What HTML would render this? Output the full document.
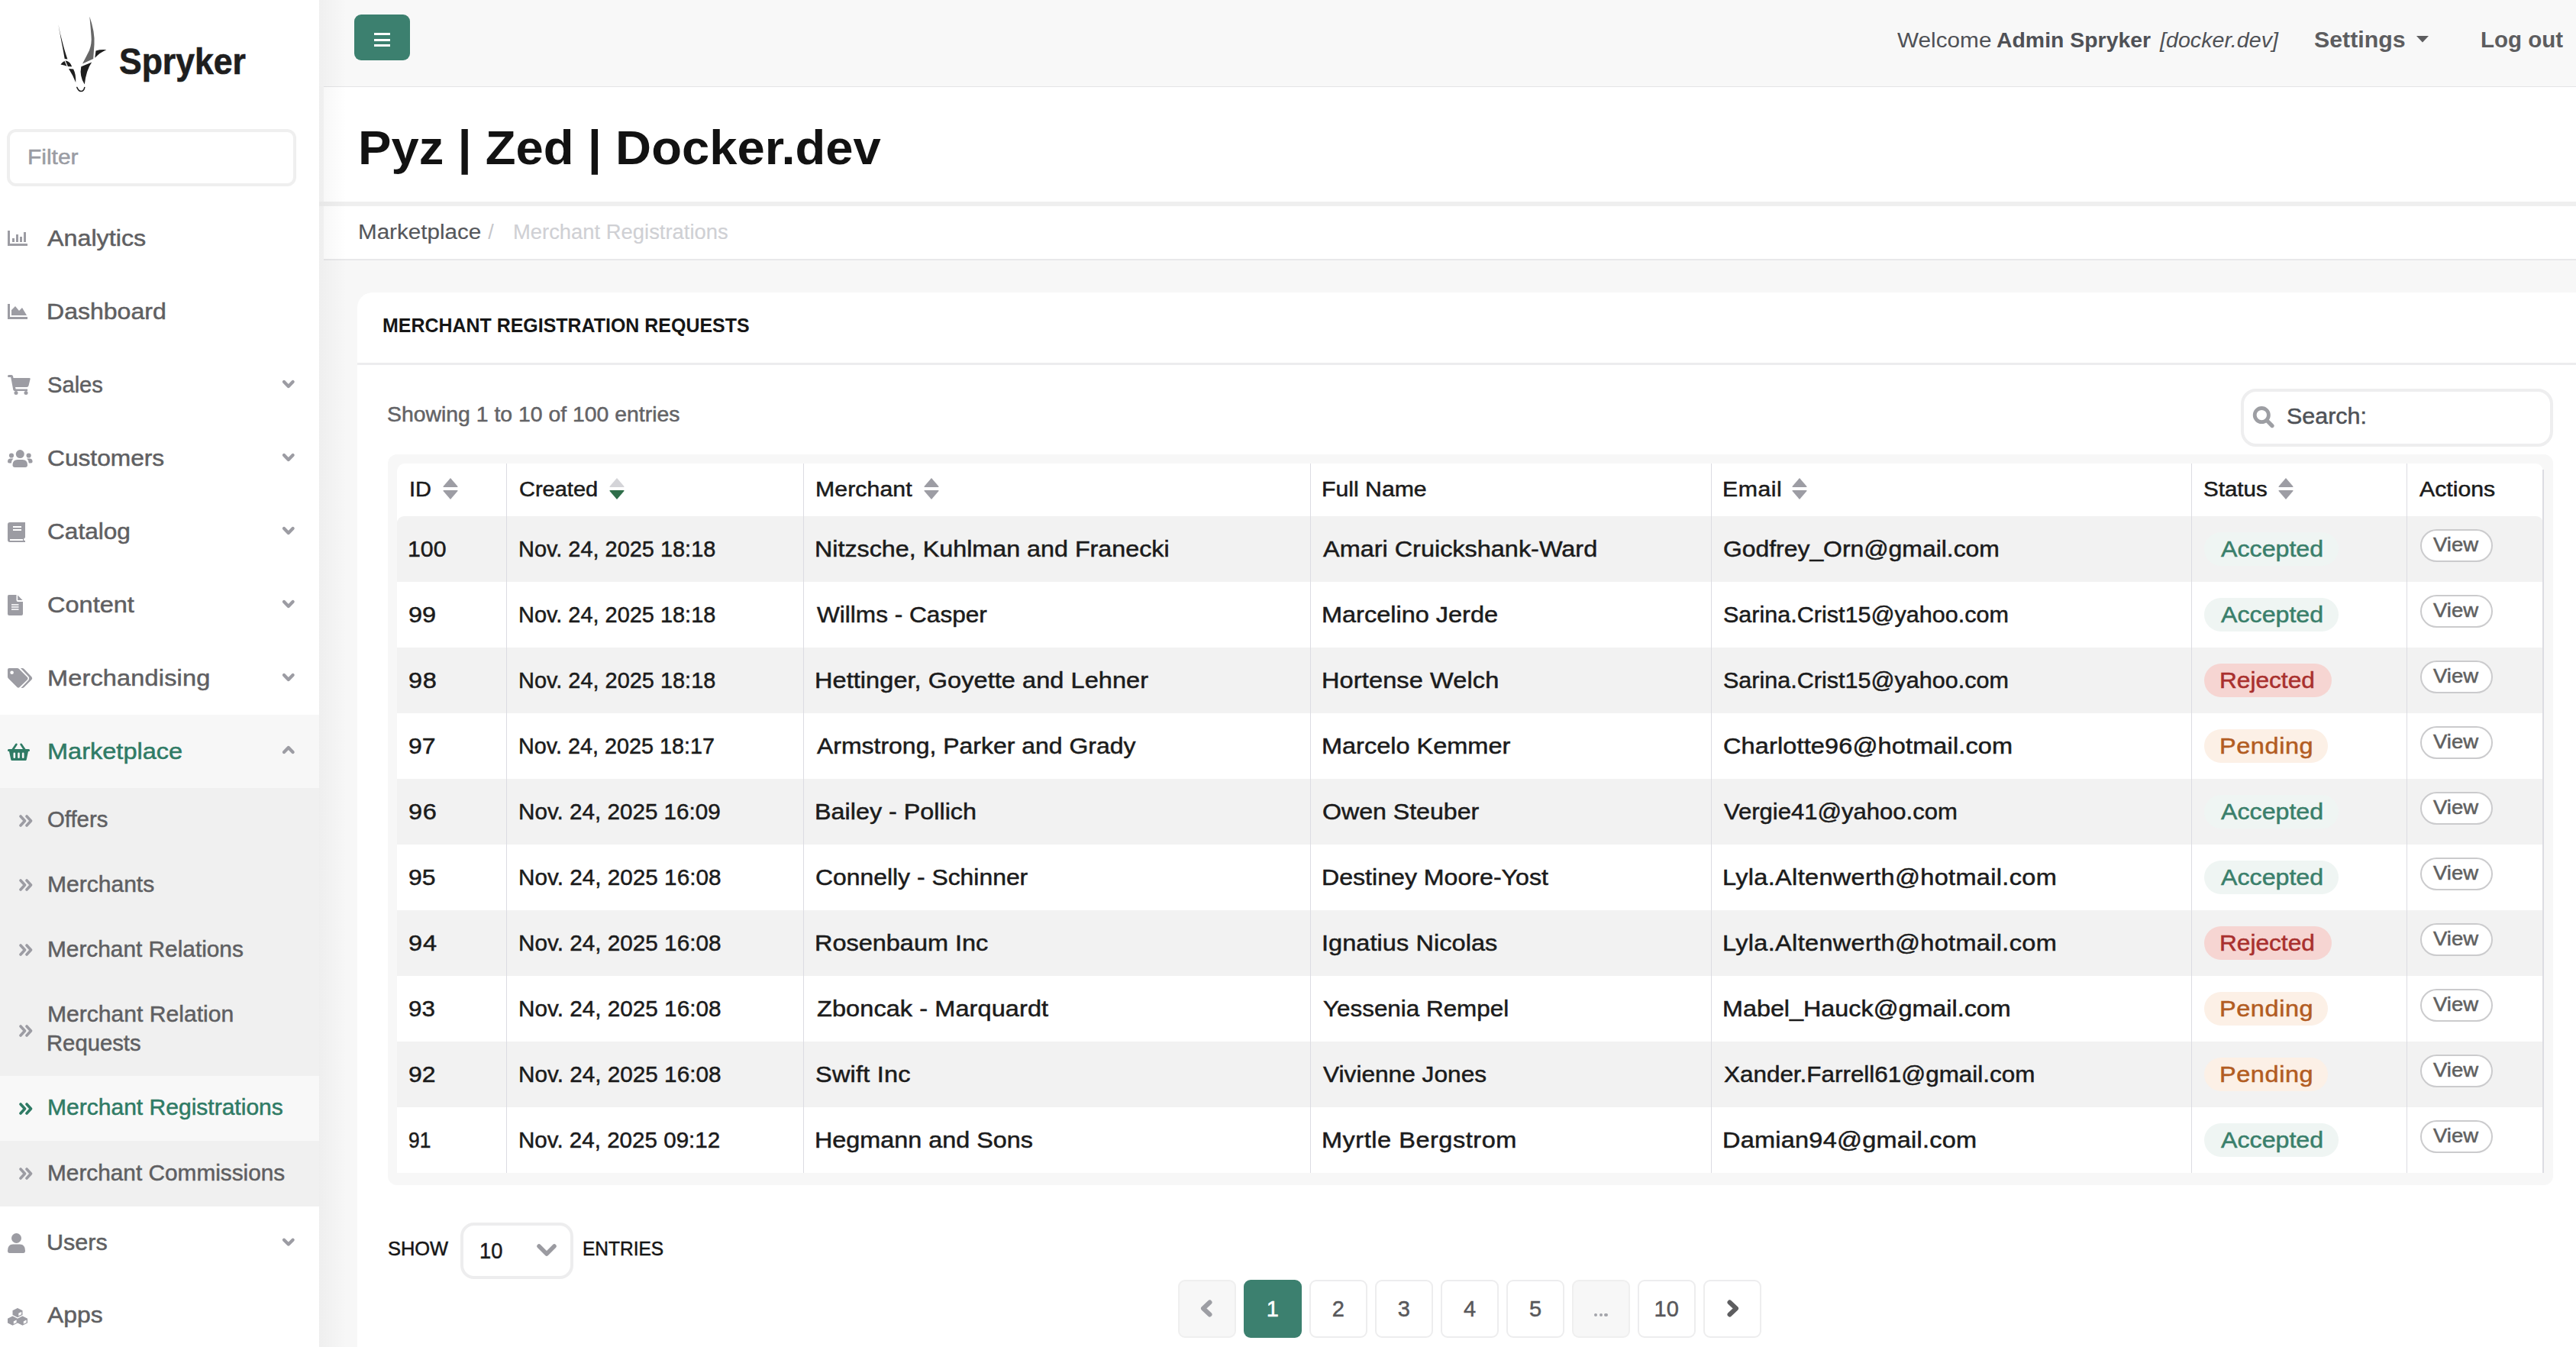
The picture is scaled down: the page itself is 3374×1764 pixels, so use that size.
<!DOCTYPE html><html><head><meta charset="utf-8"><title>Spryker</title><style>
html,body{margin:0;padding:0;width:3374px;height:1764px;overflow:hidden;background:#f5f5f5;font-family:"Liberation Sans", sans-serif;}
.t{position:absolute;white-space:pre;}
</style></head><body>
<div style="position:absolute;left:0px;top:0px;width:418px;height:1764px;background:#ffffff;"></div>
<div style="position:absolute;left:418px;top:0px;width:2956px;height:113px;background:#f8f8f8;"></div>
<div style="position:absolute;left:418px;top:113px;width:2956px;height:1651px;background:#f7f7f7;"></div>
<div style="position:absolute;left:418px;top:264px;width:2956px;height:6px;background:#efefef;"></div>
<div style="position:absolute;left:424px;top:113px;width:2950px;height:1px;background:#e4e4e6;"></div>
<div style="position:absolute;left:424px;top:114px;width:2950px;height:150px;background:#ffffff;"></div>
<div style="position:absolute;left:424px;top:270px;width:2950px;height:69px;background:#ffffff;"></div>
<div style="position:absolute;left:424px;top:339px;width:2950px;height:2px;background:#e8e8ea;"></div>
<div style="position:absolute;left:418px;top:0px;width:36px;height:1764px;background:linear-gradient(to right, rgba(0,0,0,0.035), rgba(0,0,0,0));"></div>
<svg style="position:absolute;left:0;top:0" width="160" height="130" viewBox="0 0 160 130">
<path d="M76.4 32.1 Q79.5 50 82 62 Q83.5 70 84.7 77 L88.4 77.4 Q84.5 66 82.5 58 Q78.5 44 76.4 32.1 Z" fill="#1e1e1e"/>
<path d="M117.3 21.5 Q124.5 42 123.5 58 L122.2 77 L108 83.6 Q113 74 117 66 Q120.5 57 119.5 47 Q118.5 33 117.3 21.5 Z" fill="#676767"/>
<path d="M125.5 66.4 Q132 64.5 139.4 65.2 Q131 68.5 124.3 75.8 Z" fill="#1e1e1e"/>
<path d="M79.4 84.4 Q82.5 80.3 86.5 79.6 Q92 81 94.2 87.2 L88.8 87 Q84 85.3 79.4 84.4 Z" fill="#1e1e1e"/>
<path d="M85 79.5 L88.5 87.5" stroke="#fff" stroke-width="1.2"/>
<path d="M90 90.1 L96.1 90.5 Q99.7 97 99.2 108.1 Q96 99.5 90 90.1 Z" fill="#1e1e1e"/>
<path d="M106.3 87.2 L120.2 81.5 Q112.8 92 110.8 110.5 Q103.8 100 106.3 87.2 Z" fill="#1e1e1e"/>
<path d="M100.8 114.4 Q103 119.5 106 119.5 Q110 119.5 110.8 114.4" fill="none" stroke="#1e1e1e" stroke-width="1.5" stroke-linecap="round"/>
</svg>
<div style="position:absolute;left:8.5px;top:168.5px;width:379px;height:75px;background:#ffffff;border:4px solid #efefef;border-radius:12px;box-sizing:border-box"></div>
<div style="position:absolute;left:0px;top:936px;width:418px;height:96px;background:#f7f7f7;"></div>
<div style="position:absolute;left:0px;top:1032px;width:418px;height:377px;background:#f0f0f0;"></div>
<div style="position:absolute;left:0px;top:1409px;width:418px;height:85px;background:#f8f8f8;"></div>
<div style="position:absolute;left:0px;top:1494px;width:418px;height:86px;background:#f0f0f0;"></div>
<svg style="position:absolute;left:0;top:0;overflow:visible" width="1" height="1"><path d="M372.0 500.1 L377.8 505.9 L383.6 500.1" fill="none" stroke="#9c9ca3" stroke-width="4.3" stroke-linecap="round" stroke-linejoin="round"/></svg>
<svg style="position:absolute;left:0;top:0;overflow:visible" width="1" height="1"><path d="M372.0 596.1 L377.8 601.9 L383.6 596.1" fill="none" stroke="#9c9ca3" stroke-width="4.3" stroke-linecap="round" stroke-linejoin="round"/></svg>
<svg style="position:absolute;left:0;top:0;overflow:visible" width="1" height="1"><path d="M372.0 692.1 L377.8 697.9 L383.6 692.1" fill="none" stroke="#9c9ca3" stroke-width="4.3" stroke-linecap="round" stroke-linejoin="round"/></svg>
<svg style="position:absolute;left:0;top:0;overflow:visible" width="1" height="1"><path d="M372.0 788.1 L377.8 793.9 L383.6 788.1" fill="none" stroke="#9c9ca3" stroke-width="4.3" stroke-linecap="round" stroke-linejoin="round"/></svg>
<svg style="position:absolute;left:0;top:0;overflow:visible" width="1" height="1"><path d="M372.0 884.1 L377.8 889.9 L383.6 884.1" fill="none" stroke="#9c9ca3" stroke-width="4.3" stroke-linecap="round" stroke-linejoin="round"/></svg>
<svg style="position:absolute;left:0;top:0;overflow:visible" width="1" height="1"><path d="M372.0 1623.6999999999998 L377.8 1629.5 L383.6 1623.6999999999998" fill="none" stroke="#9c9ca3" stroke-width="4.3" stroke-linecap="round" stroke-linejoin="round"/></svg>
<svg style="position:absolute;left:0;top:0;overflow:visible" width="1" height="1"><path d="M372.0 984.9 L377.8 979.1 L383.6 984.9" fill="none" stroke="#9c9ca3" stroke-width="4.3" stroke-linecap="round" stroke-linejoin="round"/></svg>
<svg style="position:absolute;left:24.5px;top:1066.5px" width="20" height="16" viewBox="0 0 20 16"><path d="M2 2 L7.5 8 L2 14 M10 2 L15.5 8 L10 14" fill="none" stroke="#9c9ca3" stroke-width="3.6" stroke-linecap="round" stroke-linejoin="round"/></svg>
<svg style="position:absolute;left:24.5px;top:1151px" width="20" height="16" viewBox="0 0 20 16"><path d="M2 2 L7.5 8 L2 14 M10 2 L15.5 8 L10 14" fill="none" stroke="#9c9ca3" stroke-width="3.6" stroke-linecap="round" stroke-linejoin="round"/></svg>
<svg style="position:absolute;left:24.5px;top:1236.2px" width="20" height="16" viewBox="0 0 20 16"><path d="M2 2 L7.5 8 L2 14 M10 2 L15.5 8 L10 14" fill="none" stroke="#9c9ca3" stroke-width="3.6" stroke-linecap="round" stroke-linejoin="round"/></svg>
<svg style="position:absolute;left:24.5px;top:1529.3px" width="20" height="16" viewBox="0 0 20 16"><path d="M2 2 L7.5 8 L2 14 M10 2 L15.5 8 L10 14" fill="none" stroke="#9c9ca3" stroke-width="3.6" stroke-linecap="round" stroke-linejoin="round"/></svg>
<svg style="position:absolute;left:24.5px;top:1342px" width="20" height="16" viewBox="0 0 20 16"><path d="M2 2 L7.5 8 L2 14 M10 2 L15.5 8 L10 14" fill="none" stroke="#9c9ca3" stroke-width="3.6" stroke-linecap="round" stroke-linejoin="round"/></svg>
<svg style="position:absolute;left:24.5px;top:1443.5px" width="20" height="16" viewBox="0 0 20 16"><path d="M2 2 L7.5 8 L2 14 M10 2 L15.5 8 L10 14" fill="none" stroke="#2f7b65" stroke-width="3.6" stroke-linecap="round" stroke-linejoin="round"/></svg>
<svg style="position:absolute;left:10px;top:302px" width="26" height="20" viewBox="0 0 26 20" fill="#9c9ca3"><rect x="0" y="0" width="3" height="20"/><rect x="0" y="17" width="26" height="3"/><rect x="6" y="10" width="3" height="5"/><rect x="11" y="5" width="3" height="10"/><rect x="16" y="8" width="3" height="7"/><rect x="21" y="2" width="3" height="13"/></svg>
<svg style="position:absolute;left:10px;top:398px" width="26" height="20" viewBox="0 0 26 20" fill="#9c9ca3"><rect x="0" y="0" width="3" height="20"/><rect x="0" y="17" width="26" height="3"/><path d="M5 15 L5 8 L10 3 L15 9 L19 5 L25 15 Z"/></svg>
<svg style="position:absolute;left:10px;top:491px" width="30" height="26" viewBox="0 0 30 26" fill="#9c9ca3"><path d="M0 1.5 Q0 0 1.5 0 L5 0 Q6.5 0 7 1.5 L7.5 4 L28.5 4 Q30 4 29.6 5.5 L27.5 14 Q27 16 25 16 L10 16 L10.6 18.5 L26 18.5 L26 21 L9 21 Q7.6 21 7.3 19.6 L4.2 3 L1.5 3 Q0 3 0 1.5Z"/><circle cx="11" cy="23.5" r="2.5"/><circle cx="24" cy="23.5" r="2.5"/></svg>
<svg style="position:absolute;left:10px;top:589px" width="33" height="23" viewBox="0 0 33 23" fill="#9c9ca3"><circle cx="16.3" cy="5.6" r="5.5"/><circle cx="5" cy="7.5" r="3.1"/><circle cx="27.6" cy="7.5" r="3.1"/><path d="M6.5 20 Q6.5 13 13 13 L19.5 13 Q26 13 26 20 Q26 23 23 23 L9.5 23 Q6.5 23 6.5 20 Z"/><path d="M0 15.5 Q0 11.5 4 11.5 L7.5 11.5 Q5 13.5 4.8 17.5 L2 17.5 Q0 17.5 0 15.5 Z"/><path d="M32.6 15.5 Q32.6 11.5 28.6 11.5 L25.1 11.5 Q27.6 13.5 27.8 17.5 L30.6 17.5 Q32.6 17.5 32.6 15.5 Z"/></svg>
<svg style="position:absolute;left:10px;top:684px" width="23" height="26" viewBox="0 0 23 26" fill="#9c9ca3"><path d="M3 0 L23 0 L23 20 Q21 21 21 23 Q21 24 23 24 L23 26 L3 26 Q0 26 0 23 L0 3 Q0 0 3 0 Z"/><rect x="7" y="5" width="11" height="2" fill="#fff"/><rect x="7" y="9" width="11" height="2" fill="#fff"/><rect x="3" y="22" width="17" height="2" fill="#fff"/></svg>
<svg style="position:absolute;left:10px;top:779px" width="20" height="27" viewBox="0 0 20 27" fill="#9c9ca3"><path d="M1.5 0 L11.5 0 L11.5 7 Q11.5 9 13.5 9 L20 9 L20 25 Q20 27 18 27 L2 27 Q0 27 0 25 L0 2 Q0 0 1.5 0 Z"/><path d="M13.2 0.5 L19.5 7 L13.2 7 Z"/><rect x="5" y="12.2" width="9.5" height="1.5" fill="#fff"/><rect x="5" y="15.2" width="9.5" height="1.5" fill="#fff"/><rect x="5" y="18.3" width="9.5" height="1.5" fill="#fff"/></svg>
<svg style="position:absolute;left:10px;top:875px" width="33" height="26" viewBox="0 0 33 26" fill="#9c9ca3"><path d="M0 2 Q0 0 2 0 L12.5 0 Q14 0 15 1 L25.5 11.5 Q27.5 13.5 25.5 15.5 L15.5 25 Q14 26.5 12.5 25 L1 13.5 Q0 12.5 0 11 Z"/><circle cx="5.6" cy="5.7" r="2.3" fill="#fff"/><path d="M17 0 L19 0 Q20.5 0 21.5 1 L31.5 11.5 Q33 13.2 31.5 15 L21.5 25 Q20.5 26 19 26 L17.5 26 L27.5 15.5 Q29.2 13.3 27.5 11.3 Z"/></svg>
<svg style="position:absolute;left:10px;top:972.5px" width="29" height="23.5" viewBox="0 0 29 23.5" fill="#2f7b65"><path d="M1.3 8 L27.7 8 Q29 8 29 9.5 Q29 11 27.7 11 L27 11 L24.8 21.5 Q24.4 23.5 22 23.5 L7 23.5 Q4.6 23.5 4.2 21.5 L2 11 L1.3 11 Q0 11 0 9.5 Q0 8 1.3 8 Z"/><path d="M5.5 8 L10.3 1 Q11 0 12.2 0.7 Q13.2 1.4 12.5 2.5 L9 8 Z"/><path d="M23.5 8 L18.7 1 Q18 0 16.8 0.7 Q15.8 1.4 16.5 2.5 L20 8 Z"/><rect x="7.5" y="12.5" width="2.6" height="7.5" rx="1.3" fill="#f7f7f7"/><rect x="13.2" y="12.5" width="2.6" height="7.5" rx="1.3" fill="#f7f7f7"/><rect x="18.9" y="12.5" width="2.6" height="7.5" rx="1.3" fill="#f7f7f7"/></svg>
<svg style="position:absolute;left:10px;top:1615px" width="23" height="26" viewBox="0 0 23 26" fill="#9c9ca3"><circle cx="11.5" cy="6.5" r="6.5"/><path d="M0 23 Q0 14.5 7 14.5 L16 14.5 Q23 14.5 23 23 Q23 26 20.5 26 L2.5 26 Q0 26 0 23 Z"/></svg>
<svg style="position:absolute;left:10px;top:1712.5px" width="26" height="23" viewBox="0 0 26 23" fill="#9c9ca3"><path d="M13.0 0 L19.5 3.2 L19.5 9 L13.0 12.2 L6.5 9 L6.5 3.2 Z"/><path d="M14.3 6.8 L18.1 4.9 L18.1 8.3 L14.3 10.2 Z" fill="#fff"/><path d="M6.5 10.6 L13 13.8 L13 19.6 L6.5 22.799999999999997 L0 19.6 L0 13.8 Z"/><path d="M7.8 17.4 L11.6 15.5 L11.6 18.9 L7.8 20.799999999999997 Z" fill="#fff"/><path d="M19.5 10.6 L26 13.8 L26 19.6 L19.5 22.799999999999997 L13 19.6 L13 13.8 Z"/><path d="M20.8 17.4 L24.6 15.5 L24.6 18.9 L20.8 20.799999999999997 Z" fill="#fff"/></svg>
<div style="position:absolute;left:464px;top:19px;width:73px;height:60px;background:#3c806f;border-radius:9px"></div>
<div style="position:absolute;left:490px;top:43px;width:21px;height:3px;background:#ffffff;"></div>
<div style="position:absolute;left:490px;top:50.5px;width:21px;height:3px;background:#ffffff;"></div>
<div style="position:absolute;left:490px;top:58px;width:21px;height:3px;background:#ffffff;"></div>
<svg style="position:absolute;left:3165px;top:46.5px" width="16" height="9"><path d="M0 0 L16 0 L8 8.5 Z" fill="#5d5d5f"/></svg>
<div style="position:absolute;left:468px;top:383px;width:2936px;height:1411px;background:#ffffff;border-radius:20px"></div>
<div style="position:absolute;left:468px;top:475px;width:2906px;height:3px;background:#ececee;"></div>
<div style="position:absolute;left:2935px;top:509px;width:409px;height:76px;background:#ffffff;border:4px solid #eeeeef;border-radius:20px;box-sizing:border-box"></div>
<svg style="position:absolute;left:2950px;top:531px" width="30" height="30" viewBox="0 0 30 30"><circle cx="12.3" cy="12.6" r="9.1" fill="none" stroke="#9d9ea3" stroke-width="4.8"/><path d="M19 19.5 L26 26.6" stroke="#9d9ea3" stroke-width="5.2" stroke-linecap="round"/></svg>
<div style="position:absolute;left:508px;top:595px;width:2836px;height:957px;background:#f7f7f7;border-radius:12px"></div>
<div style="position:absolute;left:520px;top:607px;width:2811px;height:929px;background:#ffffff;border-radius:10px 10px 0 0"></div>
<div style="position:absolute;left:520px;top:676px;width:2811px;height:86px;background:#f2f2f2;border-radius:9px 9px 0 0"></div>
<div style="position:absolute;left:520px;top:848px;width:2811px;height:86px;background:#f2f2f2;"></div>
<div style="position:absolute;left:520px;top:1020px;width:2811px;height:86px;background:#f2f2f2;"></div>
<div style="position:absolute;left:520px;top:1192px;width:2811px;height:86px;background:#f2f2f2;"></div>
<div style="position:absolute;left:520px;top:1364px;width:2811px;height:86px;background:#f2f2f2;"></div>
<div style="position:absolute;left:662.5px;top:607px;width:1.5px;height:929px;background:#dcdce2;"></div>
<div style="position:absolute;left:1051.5px;top:607px;width:1.5px;height:929px;background:#dcdce2;"></div>
<div style="position:absolute;left:1715.5px;top:607px;width:1.5px;height:929px;background:#dcdce2;"></div>
<div style="position:absolute;left:2240.5px;top:607px;width:1.5px;height:929px;background:#dcdce2;"></div>
<div style="position:absolute;left:2869.5px;top:607px;width:1.5px;height:929px;background:#dcdce2;"></div>
<div style="position:absolute;left:3151.5px;top:607px;width:1.5px;height:929px;background:#dcdce2;"></div>
<div style="position:absolute;left:3330px;top:615px;width:1.5px;height:921px;background:#dcdce2;"></div>
<svg style="position:absolute;left:579.5px;top:625.5px" width="20" height="29" viewBox="0 0 20 29"><path d="M10 0 L19.5 11 Q20 12 18.5 12 L1.5 12 Q0 12 0.5 11 Z" fill="#9d9da4"/><path d="M10 28 L19.5 17 Q20 16 18.5 16 L1.5 16 Q0 16 0.5 17 Z" fill="#9d9da4"/></svg>
<svg style="position:absolute;left:797.5px;top:625.5px" width="20" height="29" viewBox="0 0 20 29"><path d="M10 0 L19.5 11 Q20 12 18.5 12 L1.5 12 Q0 12 0.5 11 Z" fill="#d4d4d8"/><path d="M10 28 L19.5 17 Q20 16 18.5 16 L1.5 16 Q0 16 0.5 17 Z" fill="#2f6e4a"/></svg>
<svg style="position:absolute;left:1210px;top:625.5px" width="20" height="29" viewBox="0 0 20 29"><path d="M10 0 L19.5 11 Q20 12 18.5 12 L1.5 12 Q0 12 0.5 11 Z" fill="#9d9da4"/><path d="M10 28 L19.5 17 Q20 16 18.5 16 L1.5 16 Q0 16 0.5 17 Z" fill="#9d9da4"/></svg>
<svg style="position:absolute;left:2346.5px;top:625.5px" width="20" height="29" viewBox="0 0 20 29"><path d="M10 0 L19.5 11 Q20 12 18.5 12 L1.5 12 Q0 12 0.5 11 Z" fill="#9d9da4"/><path d="M10 28 L19.5 17 Q20 16 18.5 16 L1.5 16 Q0 16 0.5 17 Z" fill="#9d9da4"/></svg>
<svg style="position:absolute;left:2983.5px;top:625.5px" width="20" height="29" viewBox="0 0 20 29"><path d="M10 0 L19.5 11 Q20 12 18.5 12 L1.5 12 Q0 12 0.5 11 Z" fill="#9d9da4"/><path d="M10 28 L19.5 17 Q20 16 18.5 16 L1.5 16 Q0 16 0.5 17 Z" fill="#9d9da4"/></svg>
<div style="position:absolute;left:2887px;top:697px;width:175.5px;height:44px;background:#eff5f3;border-radius:22px"></div>
<div style="position:absolute;left:3169.5px;top:692.5px;width:95px;height:43.5px;background:#ffffff;border:2px solid #cbcbcd;border-radius:22px;box-sizing:border-box"></div>
<div style="position:absolute;left:2887px;top:783px;width:175.5px;height:44px;background:#eff5f3;border-radius:22px"></div>
<div style="position:absolute;left:3169.5px;top:778.5px;width:95px;height:43.5px;background:#ffffff;border:2px solid #cbcbcd;border-radius:22px;box-sizing:border-box"></div>
<div style="position:absolute;left:2887px;top:869px;width:167px;height:44px;background:#f6d5d2;border-radius:22px"></div>
<div style="position:absolute;left:3169.5px;top:864.5px;width:95px;height:43.5px;background:#ffffff;border:2px solid #cbcbcd;border-radius:22px;box-sizing:border-box"></div>
<div style="position:absolute;left:2887px;top:955px;width:161.6px;height:44px;background:#fcf0e6;border-radius:22px"></div>
<div style="position:absolute;left:3169.5px;top:950.5px;width:95px;height:43.5px;background:#ffffff;border:2px solid #cbcbcd;border-radius:22px;box-sizing:border-box"></div>
<div style="position:absolute;left:2887px;top:1041px;width:175.5px;height:44px;background:#eff5f3;border-radius:22px"></div>
<div style="position:absolute;left:3169.5px;top:1036.5px;width:95px;height:43.5px;background:#ffffff;border:2px solid #cbcbcd;border-radius:22px;box-sizing:border-box"></div>
<div style="position:absolute;left:2887px;top:1127px;width:175.5px;height:44px;background:#eff5f3;border-radius:22px"></div>
<div style="position:absolute;left:3169.5px;top:1122.5px;width:95px;height:43.5px;background:#ffffff;border:2px solid #cbcbcd;border-radius:22px;box-sizing:border-box"></div>
<div style="position:absolute;left:2887px;top:1213px;width:167px;height:44px;background:#f6d5d2;border-radius:22px"></div>
<div style="position:absolute;left:3169.5px;top:1208.5px;width:95px;height:43.5px;background:#ffffff;border:2px solid #cbcbcd;border-radius:22px;box-sizing:border-box"></div>
<div style="position:absolute;left:2887px;top:1299px;width:161.6px;height:44px;background:#fcf0e6;border-radius:22px"></div>
<div style="position:absolute;left:3169.5px;top:1294.5px;width:95px;height:43.5px;background:#ffffff;border:2px solid #cbcbcd;border-radius:22px;box-sizing:border-box"></div>
<div style="position:absolute;left:2887px;top:1385px;width:161.6px;height:44px;background:#fcf0e6;border-radius:22px"></div>
<div style="position:absolute;left:3169.5px;top:1380.5px;width:95px;height:43.5px;background:#ffffff;border:2px solid #cbcbcd;border-radius:22px;box-sizing:border-box"></div>
<div style="position:absolute;left:2887px;top:1471px;width:175.5px;height:44px;background:#eff5f3;border-radius:22px"></div>
<div style="position:absolute;left:3169.5px;top:1466.5px;width:95px;height:43.5px;background:#ffffff;border:2px solid #cbcbcd;border-radius:22px;box-sizing:border-box"></div>
<div style="position:absolute;left:602.5px;top:1601px;width:148.5px;height:74px;background:#ffffff;border:4px solid #ededee;border-radius:18px;box-sizing:border-box"></div>
<svg style="position:absolute;left:703px;top:1629px" width="26" height="18" viewBox="0 0 26 18"><path d="M3 3 L13 13 L23 3" fill="none" stroke="#9b9ba1" stroke-width="5.5" stroke-linecap="round" stroke-linejoin="round"/></svg>
<div style="position:absolute;left:1543.3px;top:1676.4px;width:75.5px;height:75.5px;background:#f7f7f7;border:2px solid #efefef;border-radius:9px;box-sizing:border-box"></div>
<svg style="position:absolute;left:1571.05px;top:1701px" width="20" height="26" viewBox="0 0 20 26"><path d="M13.5 4.5 L5 12.5 L13.5 20.5" fill="none" stroke="#9d9ea4" stroke-width="6" stroke-linecap="round" stroke-linejoin="round"/></svg>
<div style="position:absolute;left:1629px;top:1676.4px;width:76px;height:75.5px;background:#3c806f;border-radius:9px"></div>
<div class="t" style="left:1629px;top:1700.1px;width:75.5px;text-align:center;font-size:29px;line-height:29px;color:#ffffff;-webkit-text-stroke:0.5px #ffffff">1</div>
<div style="position:absolute;left:1715px;top:1676.4px;width:75.5px;height:75.5px;background:#ffffff;border:2px solid #ededee;border-radius:9px;box-sizing:border-box"></div>
<div class="t" style="left:1715px;top:1700.1px;width:75.5px;text-align:center;font-size:29px;line-height:29px;color:#58585b;-webkit-text-stroke:0.5px #58585b">2</div>
<div style="position:absolute;left:1801px;top:1676.4px;width:75.5px;height:75.5px;background:#ffffff;border:2px solid #ededee;border-radius:9px;box-sizing:border-box"></div>
<div class="t" style="left:1801px;top:1700.1px;width:75.5px;text-align:center;font-size:29px;line-height:29px;color:#58585b;-webkit-text-stroke:0.5px #58585b">3</div>
<div style="position:absolute;left:1887.4px;top:1676.4px;width:75.5px;height:75.5px;background:#ffffff;border:2px solid #ededee;border-radius:9px;box-sizing:border-box"></div>
<div class="t" style="left:1887.4px;top:1700.1px;width:75.5px;text-align:center;font-size:29px;line-height:29px;color:#58585b;-webkit-text-stroke:0.5px #58585b">4</div>
<div style="position:absolute;left:1973.4px;top:1676.4px;width:75.5px;height:75.5px;background:#ffffff;border:2px solid #ededee;border-radius:9px;box-sizing:border-box"></div>
<div class="t" style="left:1973.4px;top:1700.1px;width:75.5px;text-align:center;font-size:29px;line-height:29px;color:#58585b;-webkit-text-stroke:0.5px #58585b">5</div>
<div style="position:absolute;left:2059.4px;top:1676.4px;width:75.5px;height:75.5px;background:#f7f7f7;border:2px solid #efefef;border-radius:9px;box-sizing:border-box"></div>
<div style="position:absolute;left:2087.9500000000003px;top:1719.8px;width:4.4px;height:4.4px;border-radius:3px;background:#a3a4aa"></div>
<div style="position:absolute;left:2094.55px;top:1719.8px;width:4.4px;height:4.4px;border-radius:3px;background:#a3a4aa"></div>
<div style="position:absolute;left:2101.15px;top:1719.8px;width:4.4px;height:4.4px;border-radius:3px;background:#a3a4aa"></div>
<div style="position:absolute;left:2145px;top:1676.4px;width:75.5px;height:75.5px;background:#ffffff;border:2px solid #ededee;border-radius:9px;box-sizing:border-box"></div>
<div class="t" style="left:2145px;top:1700.1px;width:75.5px;text-align:center;font-size:29px;line-height:29px;color:#58585b;-webkit-text-stroke:0.5px #58585b">10</div>
<div style="position:absolute;left:2231px;top:1676.4px;width:75.5px;height:75.5px;background:#ffffff;border:2px solid #ededee;border-radius:9px;box-sizing:border-box"></div>
<svg style="position:absolute;left:2258.75px;top:1701px" width="20" height="26" viewBox="0 0 20 26"><path d="M6.5 4.5 L15 12.5 L6.5 20.5" fill="none" stroke="#5d5d5f" stroke-width="6" stroke-linecap="round" stroke-linejoin="round"/></svg>
<div class="t" style="left:155.77px;top:56.67px;font-size:48px;line-height:48px;color:#1e1e1e;font-weight:700;font-style:normal;letter-spacing:0.000px;transform:scaleX(0.9272);transform-origin:0 0;-webkit-text-stroke:0.7px #1e1e1e;">Spryker</div>
<div class="t" style="left:36.28px;top:192.64px;font-size:27px;line-height:27px;color:#9a9ca3;font-weight:400;font-style:normal;letter-spacing:0.000px;transform:scaleX(1.1085);transform-origin:0 0;-webkit-text-stroke:0.5px #9a9ca3;">Filter</div>
<div class="t" style="left:61.90px;top:298.05px;font-size:29px;line-height:29px;color:#5f5f62;font-weight:400;font-style:normal;letter-spacing:0.000px;transform:scaleX(1.1130);transform-origin:0 0;-webkit-text-stroke:0.5px #5f5f62;">Analytics</div>
<div class="t" style="left:61.09px;top:394.05px;font-size:29px;line-height:29px;color:#5f5f62;font-weight:400;font-style:normal;letter-spacing:0.000px;transform:scaleX(1.1049);transform-origin:0 0;-webkit-text-stroke:0.5px #5f5f62;">Dashboard</div>
<div class="t" style="left:62.29px;top:490.05px;font-size:29px;line-height:29px;color:#5f5f62;font-weight:400;font-style:normal;letter-spacing:-0.000px;transform:scaleX(1.0050);transform-origin:0 0;-webkit-text-stroke:0.5px #5f5f62;">Sales</div>
<div class="t" style="left:62.21px;top:586.05px;font-size:29px;line-height:29px;color:#5f5f62;font-weight:400;font-style:normal;letter-spacing:0.000px;transform:scaleX(1.0923);transform-origin:0 0;-webkit-text-stroke:0.5px #5f5f62;">Customers</div>
<div class="t" style="left:62.21px;top:682.05px;font-size:29px;line-height:29px;color:#5f5f62;font-weight:400;font-style:normal;letter-spacing:0.000px;transform:scaleX(1.0897);transform-origin:0 0;-webkit-text-stroke:0.5px #5f5f62;">Catalog</div>
<div class="t" style="left:62.18px;top:778.05px;font-size:29px;line-height:29px;color:#5f5f62;font-weight:400;font-style:normal;letter-spacing:0.019px;transform:scaleX(1.1200);transform-origin:0 0;-webkit-text-stroke:0.5px #5f5f62;">Content</div>
<div class="t" style="left:61.76px;top:874.05px;font-size:29px;line-height:29px;color:#5f5f62;font-weight:400;font-style:normal;letter-spacing:0.147px;transform:scaleX(1.1200);transform-origin:0 0;-webkit-text-stroke:0.5px #5f5f62;">Merchandising</div>
<div class="t" style="left:61.76px;top:970.05px;font-size:29px;line-height:29px;color:#2f7b65;font-weight:400;font-style:normal;letter-spacing:0.017px;transform:scaleX(1.1200);transform-origin:0 0;-webkit-text-stroke:0.5px #2f7b65;">Marketplace</div>
<div class="t" style="left:62.29px;top:1059.25px;font-size:29px;line-height:29px;color:#5f5f62;font-weight:400;font-style:normal;letter-spacing:0.000px;transform:scaleX(1.0113);transform-origin:0 0;-webkit-text-stroke:0.5px #5f5f62;">Offers</div>
<div class="t" style="left:61.93px;top:1143.75px;font-size:29px;line-height:29px;color:#5f5f62;font-weight:400;font-style:normal;letter-spacing:0.000px;transform:scaleX(1.0355);transform-origin:0 0;-webkit-text-stroke:0.5px #5f5f62;">Merchants</div>
<div class="t" style="left:61.94px;top:1228.95px;font-size:29px;line-height:29px;color:#5f5f62;font-weight:400;font-style:normal;letter-spacing:0.000px;transform:scaleX(1.0281);transform-origin:0 0;-webkit-text-stroke:0.5px #5f5f62;">Merchant Relations</div>
<div class="t" style="left:61.93px;top:1313.95px;font-size:29px;line-height:29px;color:#5f5f62;font-weight:400;font-style:normal;letter-spacing:0.000px;transform:scaleX(1.0374);transform-origin:0 0;-webkit-text-stroke:0.5px #5f5f62;">Merchant Relation</div>
<div class="t" style="left:61.28px;top:1351.65px;font-size:29px;line-height:29px;color:#5f5f62;font-weight:400;font-style:normal;letter-spacing:0.000px;transform:scaleX(1.0082);transform-origin:0 0;-webkit-text-stroke:0.5px #5f5f62;">Requests</div>
<div class="t" style="left:61.95px;top:1522.05px;font-size:29px;line-height:29px;color:#5f5f62;font-weight:400;font-style:normal;letter-spacing:0.000px;transform:scaleX(1.0274);transform-origin:0 0;-webkit-text-stroke:0.5px #5f5f62;">Merchant Commissions</div>
<div class="t" style="left:61.93px;top:1436.25px;font-size:29px;line-height:29px;color:#2f7b65;font-weight:400;font-style:normal;letter-spacing:0.000px;transform:scaleX(1.0356);transform-origin:0 0;-webkit-text-stroke:0.5px #2f7b65;">Merchant Registrations</div>
<div class="t" style="left:61.20px;top:1613.35px;font-size:29px;line-height:29px;color:#5f5f62;font-weight:400;font-style:normal;letter-spacing:0.000px;transform:scaleX(1.0515);transform-origin:0 0;-webkit-text-stroke:0.5px #5f5f62;">Users</div>
<div class="t" style="left:61.90px;top:1708.45px;font-size:29px;line-height:29px;color:#5f5f62;font-weight:400;font-style:normal;letter-spacing:0.000px;transform:scaleX(1.0991);transform-origin:0 0;-webkit-text-stroke:0.5px #5f5f62;">Apps</div>
<div class="t" style="left:2484.50px;top:39.74px;font-size:27px;line-height:27px;color:#4f5156;font-weight:400;font-style:normal;letter-spacing:0.000px;transform:scaleX(1.1016);transform-origin:0 0;">Welcome</div>
<div class="t" style="left:2614.80px;top:39.74px;font-size:27px;line-height:27px;color:#4f5156;font-weight:700;font-style:normal;letter-spacing:0.000px;transform:scaleX(1.0522);transform-origin:0 0;">Admin Spryker</div>
<div class="t" style="left:2828.56px;top:39.74px;font-size:27px;line-height:27px;color:#4f5156;font-weight:400;font-style:italic;letter-spacing:0.000px;transform:scaleX(1.0608);transform-origin:0 0;">[docker.dev]</div>
<div class="t" style="left:3030.70px;top:38.05px;font-size:29px;line-height:29px;color:#5d5d5f;font-weight:700;font-style:normal;letter-spacing:-0.000px;transform:scaleX(1.0462);transform-origin:0 0;">Settings</div>
<div class="t" style="left:3248.88px;top:38.05px;font-size:29px;line-height:29px;color:#5d5d5f;font-weight:700;font-style:normal;letter-spacing:0.000px;transform:scaleX(1.0177);transform-origin:0 0;">Log out</div>
<div class="t" style="left:469.16px;top:162.27px;font-size:63px;line-height:63px;color:#121212;font-weight:700;font-style:normal;letter-spacing:0.000px;transform:scaleX(1.0345);transform-origin:0 0;">Pyz | Zed | Docker.dev</div>
<div class="t" style="left:468.81px;top:290.74px;font-size:27px;line-height:27px;color:#55575b;font-weight:400;font-style:normal;letter-spacing:0.000px;transform:scaleX(1.0962);transform-origin:0 0;-webkit-text-stroke:0.15px #55575b;">Marketplace</div>
<div class="t" style="left:639.30px;top:290.74px;font-size:27px;line-height:27px;color:#c6c6ca;font-weight:400;font-style:normal;letter-spacing:0.000px;">/</div>
<div class="t" style="left:671.67px;top:290.74px;font-size:27px;line-height:27px;color:#cfd0d4;font-weight:400;font-style:normal;letter-spacing:0.000px;transform:scaleX(1.0145);transform-origin:0 0;-webkit-text-stroke:0.15px #cfd0d4;">Merchant Registrations</div>
<div class="t" style="left:500.80px;top:413.64px;font-size:25px;line-height:25px;color:#161616;font-weight:700;font-style:normal;letter-spacing:0.000px;transform:scaleX(0.9981);transform-origin:0 0;">MERCHANT REGISTRATION REQUESTS</div>
<div class="t" style="left:507.39px;top:529.20px;font-size:28px;line-height:28px;color:#636366;font-weight:400;font-style:normal;letter-spacing:0.000px;transform:scaleX(1.0137);transform-origin:0 0;-webkit-text-stroke:0.5px #636366;">Showing 1 to 10 of 100 entries</div>
<div class="t" style="left:2994.95px;top:530.85px;font-size:29px;line-height:29px;color:#4f5257;font-weight:400;font-style:normal;letter-spacing:0.000px;transform:scaleX(1.0497);transform-origin:0 0;-webkit-text-stroke:0.5px #4f5257;">Search:</div>
<div class="t" style="left:536.35px;top:627.74px;font-size:27px;line-height:27px;color:#1b1b1b;font-weight:400;font-style:normal;letter-spacing:0.000px;transform:scaleX(1.0734);transform-origin:0 0;-webkit-text-stroke:0.5px #1b1b1b;">ID</div>
<div class="t" style="left:679.93px;top:627.74px;font-size:27px;line-height:27px;color:#1b1b1b;font-weight:400;font-style:normal;letter-spacing:0.000px;transform:scaleX(1.0740);transform-origin:0 0;-webkit-text-stroke:0.5px #1b1b1b;">Created</div>
<div class="t" style="left:1068.06px;top:627.74px;font-size:27px;line-height:27px;color:#1b1b1b;font-weight:400;font-style:normal;letter-spacing:0.067px;transform:scaleX(1.1200);transform-origin:0 0;-webkit-text-stroke:0.5px #1b1b1b;">Merchant</div>
<div class="t" style="left:1730.86px;top:627.74px;font-size:27px;line-height:27px;color:#1b1b1b;font-weight:400;font-style:normal;letter-spacing:0.000px;transform:scaleX(1.1190);transform-origin:0 0;-webkit-text-stroke:0.5px #1b1b1b;">Full Name</div>
<div class="t" style="left:2255.76px;top:627.74px;font-size:27px;line-height:27px;color:#1b1b1b;font-weight:400;font-style:normal;letter-spacing:0.478px;transform:scaleX(1.1200);transform-origin:0 0;-webkit-text-stroke:0.5px #1b1b1b;">Email</div>
<div class="t" style="left:2886.31px;top:627.74px;font-size:27px;line-height:27px;color:#1b1b1b;font-weight:400;font-style:normal;letter-spacing:0.000px;transform:scaleX(1.0927);transform-origin:0 0;-webkit-text-stroke:0.5px #1b1b1b;">Status</div>
<div class="t" style="left:3169.40px;top:627.74px;font-size:27px;line-height:27px;color:#1b1b1b;font-weight:400;font-style:normal;letter-spacing:0.000px;transform:scaleX(1.1199);transform-origin:0 0;-webkit-text-stroke:0.5px #1b1b1b;">Actions</div>
<div class="t" style="left:533.91px;top:705.05px;font-size:29px;line-height:29px;color:#1b1b1b;font-weight:400;font-style:normal;letter-spacing:-0.000px;transform:scaleX(1.0429);transform-origin:0 0;-webkit-text-stroke:0.5px #1b1b1b;">100</div>
<div class="t" style="left:679.11px;top:705.05px;font-size:29px;line-height:29px;color:#1b1b1b;font-weight:400;font-style:normal;letter-spacing:0.000px;transform:scaleX(0.9972);transform-origin:0 0;-webkit-text-stroke:0.5px #1b1b1b;">Nov. 24, 2025 18:18</div>
<div class="t" style="left:1067.27px;top:705.05px;font-size:29px;line-height:29px;color:#1b1b1b;font-weight:400;font-style:normal;letter-spacing:0.000px;transform:scaleX(1.1130);transform-origin:0 0;-webkit-text-stroke:0.5px #1b1b1b;">Nitzsche, Kuhlman and Franecki</div>
<div class="t" style="left:1733.30px;top:705.05px;font-size:29px;line-height:29px;color:#1b1b1b;font-weight:400;font-style:normal;letter-spacing:0.000px;transform:scaleX(1.1182);transform-origin:0 0;-webkit-text-stroke:0.5px #1b1b1b;">Amari Cruickshank-Ward</div>
<div class="t" style="left:2256.90px;top:705.05px;font-size:29px;line-height:29px;color:#1b1b1b;font-weight:400;font-style:normal;letter-spacing:0.000px;transform:scaleX(1.0992);transform-origin:0 0;-webkit-text-stroke:0.5px #1b1b1b;">Godfrey_Orn@gmail.com</div>
<div class="t" style="left:2909.40px;top:704.95px;font-size:29px;line-height:29px;color:#3a7f6b;font-weight:400;font-style:normal;letter-spacing:0.000px;transform:scaleX(1.1095);transform-origin:0 0;-webkit-text-stroke:0.5px #3a7f6b;">Accepted</div>
<div class="t" style="left:3187.00px;top:701.44px;font-size:25px;line-height:25px;color:#606060;font-weight:400;font-style:normal;letter-spacing:0.000px;transform:scaleX(1.1009);transform-origin:0 0;-webkit-text-stroke:0.5px #606060;">View</div>
<div class="t" style="left:534.88px;top:791.05px;font-size:29px;line-height:29px;color:#1b1b1b;font-weight:400;font-style:normal;letter-spacing:0.050px;transform:scaleX(1.1200);transform-origin:0 0;-webkit-text-stroke:0.5px #1b1b1b;">99</div>
<div class="t" style="left:679.11px;top:791.05px;font-size:29px;line-height:29px;color:#1b1b1b;font-weight:400;font-style:normal;letter-spacing:0.000px;transform:scaleX(0.9972);transform-origin:0 0;-webkit-text-stroke:0.5px #1b1b1b;">Nov. 24, 2025 18:18</div>
<div class="t" style="left:1069.50px;top:791.05px;font-size:29px;line-height:29px;color:#1b1b1b;font-weight:400;font-style:normal;letter-spacing:-0.000px;transform:scaleX(1.0890);transform-origin:0 0;-webkit-text-stroke:0.5px #1b1b1b;">Willms - Casper</div>
<div class="t" style="left:1731.06px;top:791.05px;font-size:29px;line-height:29px;color:#1b1b1b;font-weight:400;font-style:normal;letter-spacing:0.000px;transform:scaleX(1.1197);transform-origin:0 0;-webkit-text-stroke:0.5px #1b1b1b;">Marcelino Jerde</div>
<div class="t" style="left:2256.95px;top:791.05px;font-size:29px;line-height:29px;color:#1b1b1b;font-weight:400;font-style:normal;letter-spacing:0.000px;transform:scaleX(1.0530);transform-origin:0 0;-webkit-text-stroke:0.5px #1b1b1b;">Sarina.Crist15@yahoo.com</div>
<div class="t" style="left:2909.40px;top:790.95px;font-size:29px;line-height:29px;color:#3a7f6b;font-weight:400;font-style:normal;letter-spacing:0.000px;transform:scaleX(1.1095);transform-origin:0 0;-webkit-text-stroke:0.5px #3a7f6b;">Accepted</div>
<div class="t" style="left:3187.00px;top:787.44px;font-size:25px;line-height:25px;color:#606060;font-weight:400;font-style:normal;letter-spacing:0.000px;transform:scaleX(1.1009);transform-origin:0 0;-webkit-text-stroke:0.5px #606060;">View</div>
<div class="t" style="left:534.88px;top:877.05px;font-size:29px;line-height:29px;color:#1b1b1b;font-weight:400;font-style:normal;letter-spacing:0.586px;transform:scaleX(1.1200);transform-origin:0 0;-webkit-text-stroke:0.5px #1b1b1b;">98</div>
<div class="t" style="left:679.11px;top:877.05px;font-size:29px;line-height:29px;color:#1b1b1b;font-weight:400;font-style:normal;letter-spacing:0.000px;transform:scaleX(0.9972);transform-origin:0 0;-webkit-text-stroke:0.5px #1b1b1b;">Nov. 24, 2025 18:18</div>
<div class="t" style="left:1067.26px;top:877.05px;font-size:29px;line-height:29px;color:#1b1b1b;font-weight:400;font-style:normal;letter-spacing:0.060px;transform:scaleX(1.1200);transform-origin:0 0;-webkit-text-stroke:0.5px #1b1b1b;">Hettinger, Goyette and Lehner</div>
<div class="t" style="left:1731.06px;top:877.05px;font-size:29px;line-height:29px;color:#1b1b1b;font-weight:400;font-style:normal;letter-spacing:0.126px;transform:scaleX(1.1200);transform-origin:0 0;-webkit-text-stroke:0.5px #1b1b1b;">Hortense Welch</div>
<div class="t" style="left:2256.95px;top:877.05px;font-size:29px;line-height:29px;color:#1b1b1b;font-weight:400;font-style:normal;letter-spacing:0.000px;transform:scaleX(1.0530);transform-origin:0 0;-webkit-text-stroke:0.5px #1b1b1b;">Sarina.Crist15@yahoo.com</div>
<div class="t" style="left:2907.22px;top:876.95px;font-size:29px;line-height:29px;color:#a9302e;font-weight:400;font-style:normal;letter-spacing:0.000px;transform:scaleX(1.0905);transform-origin:0 0;-webkit-text-stroke:0.5px #a9302e;">Rejected</div>
<div class="t" style="left:3187.00px;top:873.44px;font-size:25px;line-height:25px;color:#606060;font-weight:400;font-style:normal;letter-spacing:0.000px;transform:scaleX(1.1009);transform-origin:0 0;-webkit-text-stroke:0.5px #606060;">View</div>
<div class="t" style="left:534.90px;top:963.05px;font-size:29px;line-height:29px;color:#1b1b1b;font-weight:400;font-style:normal;letter-spacing:0.000px;transform:scaleX(1.1019);transform-origin:0 0;-webkit-text-stroke:0.5px #1b1b1b;">97</div>
<div class="t" style="left:679.12px;top:963.05px;font-size:29px;line-height:29px;color:#1b1b1b;font-weight:400;font-style:normal;letter-spacing:0.000px;transform:scaleX(0.9921);transform-origin:0 0;-webkit-text-stroke:0.5px #1b1b1b;">Nov. 24, 2025 18:17</div>
<div class="t" style="left:1069.50px;top:963.05px;font-size:29px;line-height:29px;color:#1b1b1b;font-weight:400;font-style:normal;letter-spacing:0.000px;transform:scaleX(1.1022);transform-origin:0 0;-webkit-text-stroke:0.5px #1b1b1b;">Armstrong, Parker and Grady</div>
<div class="t" style="left:1731.06px;top:963.05px;font-size:29px;line-height:29px;color:#1b1b1b;font-weight:400;font-style:normal;letter-spacing:0.000px;transform:scaleX(1.1200);transform-origin:0 0;-webkit-text-stroke:0.5px #1b1b1b;">Marcelo Kemmer</div>
<div class="t" style="left:2256.88px;top:963.05px;font-size:29px;line-height:29px;color:#1b1b1b;font-weight:400;font-style:normal;letter-spacing:0.127px;transform:scaleX(1.1200);transform-origin:0 0;-webkit-text-stroke:0.5px #1b1b1b;">Charlotte96@hotmail.com</div>
<div class="t" style="left:2907.16px;top:962.95px;font-size:29px;line-height:29px;color:#b25c22;font-weight:400;font-style:normal;letter-spacing:0.507px;transform:scaleX(1.1200);transform-origin:0 0;-webkit-text-stroke:0.5px #b25c22;">Pending</div>
<div class="t" style="left:3187.00px;top:959.44px;font-size:25px;line-height:25px;color:#606060;font-weight:400;font-style:normal;letter-spacing:0.000px;transform:scaleX(1.1009);transform-origin:0 0;-webkit-text-stroke:0.5px #606060;">View</div>
<div class="t" style="left:534.88px;top:1049.05px;font-size:29px;line-height:29px;color:#1b1b1b;font-weight:400;font-style:normal;letter-spacing:0.586px;transform:scaleX(1.1200);transform-origin:0 0;-webkit-text-stroke:0.5px #1b1b1b;">96</div>
<div class="t" style="left:679.06px;top:1049.05px;font-size:29px;line-height:29px;color:#1b1b1b;font-weight:400;font-style:normal;letter-spacing:0.000px;transform:scaleX(1.0222);transform-origin:0 0;-webkit-text-stroke:0.5px #1b1b1b;">Nov. 24, 2025 16:09</div>
<div class="t" style="left:1067.27px;top:1049.05px;font-size:29px;line-height:29px;color:#1b1b1b;font-weight:400;font-style:normal;letter-spacing:0.000px;transform:scaleX(1.1146);transform-origin:0 0;-webkit-text-stroke:0.5px #1b1b1b;">Bailey - Pollich</div>
<div class="t" style="left:1732.19px;top:1049.05px;font-size:29px;line-height:29px;color:#1b1b1b;font-weight:400;font-style:normal;letter-spacing:0.000px;transform:scaleX(1.1070);transform-origin:0 0;-webkit-text-stroke:0.5px #1b1b1b;">Owen Steuber</div>
<div class="t" style="left:2258.00px;top:1049.05px;font-size:29px;line-height:29px;color:#1b1b1b;font-weight:400;font-style:normal;letter-spacing:0.000px;transform:scaleX(1.0702);transform-origin:0 0;-webkit-text-stroke:0.5px #1b1b1b;">Vergie41@yahoo.com</div>
<div class="t" style="left:2909.40px;top:1048.95px;font-size:29px;line-height:29px;color:#3a7f6b;font-weight:400;font-style:normal;letter-spacing:0.000px;transform:scaleX(1.1095);transform-origin:0 0;-webkit-text-stroke:0.5px #3a7f6b;">Accepted</div>
<div class="t" style="left:3187.00px;top:1045.44px;font-size:25px;line-height:25px;color:#606060;font-weight:400;font-style:normal;letter-spacing:0.000px;transform:scaleX(1.1009);transform-origin:0 0;-webkit-text-stroke:0.5px #606060;">View</div>
<div class="t" style="left:534.90px;top:1135.05px;font-size:29px;line-height:29px;color:#1b1b1b;font-weight:400;font-style:normal;letter-spacing:0.000px;transform:scaleX(1.1019);transform-origin:0 0;-webkit-text-stroke:0.5px #1b1b1b;">95</div>
<div class="t" style="left:679.05px;top:1135.05px;font-size:29px;line-height:29px;color:#1b1b1b;font-weight:400;font-style:normal;letter-spacing:0.000px;transform:scaleX(1.0249);transform-origin:0 0;-webkit-text-stroke:0.5px #1b1b1b;">Nov. 24, 2025 16:08</div>
<div class="t" style="left:1068.40px;top:1135.05px;font-size:29px;line-height:29px;color:#1b1b1b;font-weight:400;font-style:normal;letter-spacing:0.000px;transform:scaleX(1.0994);transform-origin:0 0;-webkit-text-stroke:0.5px #1b1b1b;">Connelly - Schinner</div>
<div class="t" style="left:1731.09px;top:1135.05px;font-size:29px;line-height:29px;color:#1b1b1b;font-weight:400;font-style:normal;letter-spacing:0.000px;transform:scaleX(1.1073);transform-origin:0 0;-webkit-text-stroke:0.5px #1b1b1b;">Destiney Moore-Yost</div>
<div class="t" style="left:2255.76px;top:1135.05px;font-size:29px;line-height:29px;color:#1b1b1b;font-weight:400;font-style:normal;letter-spacing:0.303px;transform:scaleX(1.1200);transform-origin:0 0;-webkit-text-stroke:0.5px #1b1b1b;">Lyla.Altenwerth@hotmail.com</div>
<div class="t" style="left:2909.40px;top:1134.95px;font-size:29px;line-height:29px;color:#3a7f6b;font-weight:400;font-style:normal;letter-spacing:0.000px;transform:scaleX(1.1095);transform-origin:0 0;-webkit-text-stroke:0.5px #3a7f6b;">Accepted</div>
<div class="t" style="left:3187.00px;top:1131.44px;font-size:25px;line-height:25px;color:#606060;font-weight:400;font-style:normal;letter-spacing:0.000px;transform:scaleX(1.1009);transform-origin:0 0;-webkit-text-stroke:0.5px #606060;">View</div>
<div class="t" style="left:534.88px;top:1221.05px;font-size:29px;line-height:29px;color:#1b1b1b;font-weight:400;font-style:normal;letter-spacing:0.747px;transform:scaleX(1.1200);transform-origin:0 0;-webkit-text-stroke:0.5px #1b1b1b;">94</div>
<div class="t" style="left:679.05px;top:1221.05px;font-size:29px;line-height:29px;color:#1b1b1b;font-weight:400;font-style:normal;letter-spacing:0.000px;transform:scaleX(1.0249);transform-origin:0 0;-webkit-text-stroke:0.5px #1b1b1b;">Nov. 24, 2025 16:08</div>
<div class="t" style="left:1067.26px;top:1221.05px;font-size:29px;line-height:29px;color:#1b1b1b;font-weight:400;font-style:normal;letter-spacing:0.000px;transform:scaleX(1.1191);transform-origin:0 0;-webkit-text-stroke:0.5px #1b1b1b;">Rosenbaum Inc</div>
<div class="t" style="left:1731.06px;top:1221.05px;font-size:29px;line-height:29px;color:#1b1b1b;font-weight:400;font-style:normal;letter-spacing:0.061px;transform:scaleX(1.1200);transform-origin:0 0;-webkit-text-stroke:0.5px #1b1b1b;">Ignatius Nicolas</div>
<div class="t" style="left:2255.76px;top:1221.05px;font-size:29px;line-height:29px;color:#1b1b1b;font-weight:400;font-style:normal;letter-spacing:0.303px;transform:scaleX(1.1200);transform-origin:0 0;-webkit-text-stroke:0.5px #1b1b1b;">Lyla.Altenwerth@hotmail.com</div>
<div class="t" style="left:2907.22px;top:1220.95px;font-size:29px;line-height:29px;color:#a9302e;font-weight:400;font-style:normal;letter-spacing:0.000px;transform:scaleX(1.0905);transform-origin:0 0;-webkit-text-stroke:0.5px #a9302e;">Rejected</div>
<div class="t" style="left:3187.00px;top:1217.44px;font-size:25px;line-height:25px;color:#606060;font-weight:400;font-style:normal;letter-spacing:0.000px;transform:scaleX(1.1009);transform-origin:0 0;-webkit-text-stroke:0.5px #606060;">View</div>
<div class="t" style="left:534.92px;top:1307.05px;font-size:29px;line-height:29px;color:#1b1b1b;font-weight:400;font-style:normal;letter-spacing:0.000px;transform:scaleX(1.0787);transform-origin:0 0;-webkit-text-stroke:0.5px #1b1b1b;">93</div>
<div class="t" style="left:679.05px;top:1307.05px;font-size:29px;line-height:29px;color:#1b1b1b;font-weight:400;font-style:normal;letter-spacing:0.000px;transform:scaleX(1.0249);transform-origin:0 0;-webkit-text-stroke:0.5px #1b1b1b;">Nov. 24, 2025 16:08</div>
<div class="t" style="left:1069.50px;top:1307.05px;font-size:29px;line-height:29px;color:#1b1b1b;font-weight:400;font-style:normal;letter-spacing:0.079px;transform:scaleX(1.1200);transform-origin:0 0;-webkit-text-stroke:0.5px #1b1b1b;">Zboncak - Marquardt</div>
<div class="t" style="left:1733.30px;top:1307.05px;font-size:29px;line-height:29px;color:#1b1b1b;font-weight:400;font-style:normal;letter-spacing:-0.000px;transform:scaleX(1.0825);transform-origin:0 0;-webkit-text-stroke:0.5px #1b1b1b;">Yessenia Rempel</div>
<div class="t" style="left:2255.77px;top:1307.05px;font-size:29px;line-height:29px;color:#1b1b1b;font-weight:400;font-style:normal;letter-spacing:0.000px;transform:scaleX(1.1146);transform-origin:0 0;-webkit-text-stroke:0.5px #1b1b1b;">Mabel_Hauck@gmail.com</div>
<div class="t" style="left:2907.16px;top:1306.95px;font-size:29px;line-height:29px;color:#b25c22;font-weight:400;font-style:normal;letter-spacing:0.507px;transform:scaleX(1.1200);transform-origin:0 0;-webkit-text-stroke:0.5px #b25c22;">Pending</div>
<div class="t" style="left:3187.00px;top:1303.44px;font-size:25px;line-height:25px;color:#606060;font-weight:400;font-style:normal;letter-spacing:0.000px;transform:scaleX(1.1009);transform-origin:0 0;-webkit-text-stroke:0.5px #606060;">View</div>
<div class="t" style="left:534.90px;top:1393.05px;font-size:29px;line-height:29px;color:#1b1b1b;font-weight:400;font-style:normal;letter-spacing:0.000px;transform:scaleX(1.1019);transform-origin:0 0;-webkit-text-stroke:0.5px #1b1b1b;">92</div>
<div class="t" style="left:679.05px;top:1393.05px;font-size:29px;line-height:29px;color:#1b1b1b;font-weight:400;font-style:normal;letter-spacing:0.000px;transform:scaleX(1.0249);transform-origin:0 0;-webkit-text-stroke:0.5px #1b1b1b;">Nov. 24, 2025 16:08</div>
<div class="t" style="left:1068.38px;top:1393.05px;font-size:29px;line-height:29px;color:#1b1b1b;font-weight:400;font-style:normal;letter-spacing:0.206px;transform:scaleX(1.1200);transform-origin:0 0;-webkit-text-stroke:0.5px #1b1b1b;">Swift Inc</div>
<div class="t" style="left:1733.30px;top:1393.05px;font-size:29px;line-height:29px;color:#1b1b1b;font-weight:400;font-style:normal;letter-spacing:0.000px;transform:scaleX(1.0912);transform-origin:0 0;-webkit-text-stroke:0.5px #1b1b1b;">Vivienne Jones</div>
<div class="t" style="left:2258.00px;top:1393.05px;font-size:29px;line-height:29px;color:#1b1b1b;font-weight:400;font-style:normal;letter-spacing:0.000px;transform:scaleX(1.0834);transform-origin:0 0;-webkit-text-stroke:0.5px #1b1b1b;">Xander.Farrell61@gmail.com</div>
<div class="t" style="left:2907.16px;top:1392.95px;font-size:29px;line-height:29px;color:#b25c22;font-weight:400;font-style:normal;letter-spacing:0.507px;transform:scaleX(1.1200);transform-origin:0 0;-webkit-text-stroke:0.5px #b25c22;">Pending</div>
<div class="t" style="left:3187.00px;top:1389.44px;font-size:25px;line-height:25px;color:#606060;font-weight:400;font-style:normal;letter-spacing:0.000px;transform:scaleX(1.1009);transform-origin:0 0;-webkit-text-stroke:0.5px #606060;">View</div>
<div class="t" style="left:535.09px;top:1479.05px;font-size:29px;line-height:29px;color:#1b1b1b;font-weight:400;font-style:normal;letter-spacing:0.000px;transform:scaleX(0.9094);transform-origin:0 0;-webkit-text-stroke:0.5px #1b1b1b;">91</div>
<div class="t" style="left:679.06px;top:1479.05px;font-size:29px;line-height:29px;color:#1b1b1b;font-weight:400;font-style:normal;letter-spacing:0.000px;transform:scaleX(1.0199);transform-origin:0 0;-webkit-text-stroke:0.5px #1b1b1b;">Nov. 24, 2025 09:12</div>
<div class="t" style="left:1067.27px;top:1479.05px;font-size:29px;line-height:29px;color:#1b1b1b;font-weight:400;font-style:normal;letter-spacing:0.000px;transform:scaleX(1.1157);transform-origin:0 0;-webkit-text-stroke:0.5px #1b1b1b;">Hegmann and Sons</div>
<div class="t" style="left:1731.06px;top:1479.05px;font-size:29px;line-height:29px;color:#1b1b1b;font-weight:400;font-style:normal;letter-spacing:0.481px;transform:scaleX(1.1200);transform-origin:0 0;-webkit-text-stroke:0.5px #1b1b1b;">Myrtle Bergstrom</div>
<div class="t" style="left:2255.76px;top:1479.05px;font-size:29px;line-height:29px;color:#1b1b1b;font-weight:400;font-style:normal;letter-spacing:0.211px;transform:scaleX(1.1200);transform-origin:0 0;-webkit-text-stroke:0.5px #1b1b1b;">Damian94@gmail.com</div>
<div class="t" style="left:2909.40px;top:1478.95px;font-size:29px;line-height:29px;color:#3a7f6b;font-weight:400;font-style:normal;letter-spacing:0.000px;transform:scaleX(1.1095);transform-origin:0 0;-webkit-text-stroke:0.5px #3a7f6b;">Accepted</div>
<div class="t" style="left:3187.00px;top:1475.44px;font-size:25px;line-height:25px;color:#606060;font-weight:400;font-style:normal;letter-spacing:0.000px;transform:scaleX(1.1009);transform-origin:0 0;-webkit-text-stroke:0.5px #606060;">View</div>
<div class="t" style="left:507.88px;top:1623.44px;font-size:25px;line-height:25px;color:#161616;font-weight:400;font-style:normal;letter-spacing:0.000px;transform:scaleX(1.0172);transform-origin:0 0;-webkit-text-stroke:0.5px #161616;">SHOW</div>
<div class="t" style="left:628.22px;top:1624.15px;font-size:29px;line-height:29px;color:#1b1b1b;font-weight:400;font-style:normal;letter-spacing:0.000px;transform:scaleX(0.9407);transform-origin:0 0;-webkit-text-stroke:0.5px #1b1b1b;">10</div>
<div class="t" style="left:763.04px;top:1623.44px;font-size:25px;line-height:25px;color:#161616;font-weight:400;font-style:normal;letter-spacing:0.000px;transform:scaleX(0.9794);transform-origin:0 0;-webkit-text-stroke:0.5px #161616;">ENTRIES</div>
</body></html>
